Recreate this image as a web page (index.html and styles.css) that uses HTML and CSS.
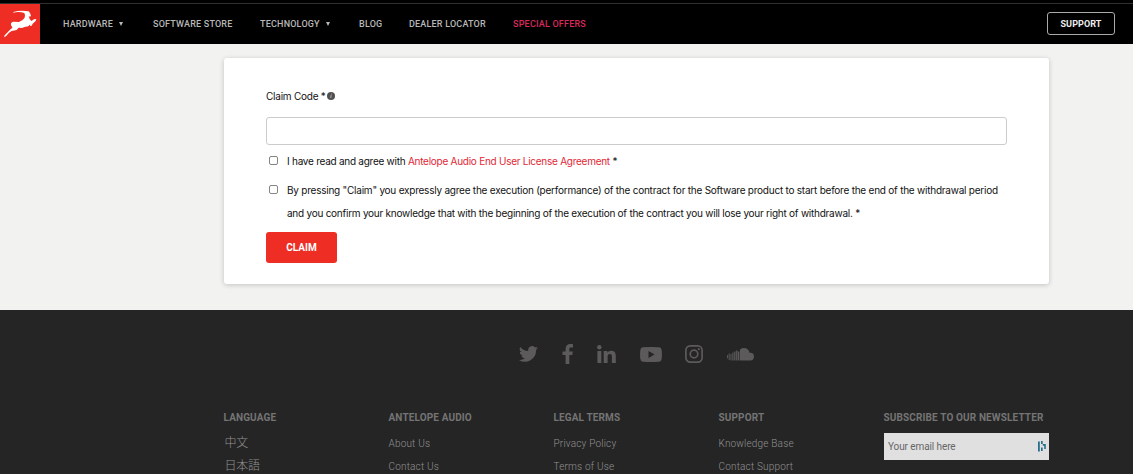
FILE: index.html
```html
<!DOCTYPE html>
<html lang="en">
<head>
  <meta charset="UTF-8">
  <meta name="viewport" content="width=device-width, initial-scale=1.0">
  <title>Claim - Antelope Audio</title>
  <link rel="stylesheet" href="styles.css">
</head>
<body>

  <header class="header">
    <a class="logo" href="#">
      <svg viewBox="0 12 120 120" width="40" height="40" fill="#fff">
        <path d="M40 36 Q58 31 77 33 L86 34 L90 39 L93 48 L89 50 L86 47 Q87 56 94 63 L102 58 L109 57 L107 63 L98 71 L95 77 L90 78 L91 73 L85 79 L74 81 L66 84 L56 83 L50 90 L35 93 L27 98 L18 109 L12 111 L14 106 L23 97 L30 89 L37 83 L35 76 L33 80 L33 69 L39 65 L57 66 Q69 61 74 53 Q77 46 73 39 Q57 34 40 38Z"/>
      </svg>
    </a>
    <nav class="nav">
      <a class="nav-hardware" href="#">HARDWARE<span class="caret"></span></a>
      <a class="nav-store" href="#">SOFTWARE STORE</a>
      <a class="nav-tech" href="#">TECHNOLOGY<span class="caret"></span></a>
      <a class="nav-blog" href="#">BLOG</a>
      <a class="nav-dealer" href="#">DEALER LOCATOR</a>
      <a class="nav-offers" href="#">SPECIAL OFFERS</a>
    </nav>
    <a class="support-btn" href="#">SUPPORT</a>
  </header>

  <main class="main">
    <form class="claim-card">
      <label class="claim-label" for="code">Claim Code *
        <svg width="8" height="8" viewBox="0 0 16 16"><circle cx="8" cy="8" r="8" fill="#505050"/><path d="M8.500 3.200h1.600l-.4 2H8zM7 6.500h2.500L8.500 12H6.300l.8-4H6.500z" fill="#aaa"/></svg>
      </label>
      <input class="claim-input" id="code" type="text">
      <label class="check">
        <input type="checkbox">
        <span class="agree">I have read and agree with <a href="#">Antelope Audio End User License Agreement</a> *</span>
      </label>
      <label class="check check-terms">
        <input type="checkbox">
        <span>By pressing "Claim" you expressly agree the execution (performance) of the contract for the Software product to start before the end of the withdrawal period<br><span class="line-two">and you confirm your knowledge that with the beginning of the execution of the contract you will lose your right of withdrawal. *</span></span>
      </label>
      <button class="claim-btn" type="button">CLAIM</button>
    </form>
  </main>

  <footer class="footer">
    <div class="social">
      <svg class="twitter" width="19" height="16" viewBox="0 0 24 20"><path d="M24 2.400a9.800 9.800 0 0 1-2.800.8A4.900 4.900 0 0 0 23.300.5a9.900 9.900 0 0 1-3.100 1.200 4.900 4.900 0 0 0-8.400 4.500A14 14 0 0 1 1.700 1a4.900 4.900 0 0 0 1.500 6.600A4.900 4.900 0 0 1 1 7v.1a4.900 4.900 0 0 0 3.900 4.800 5 5 0 0 1-2.200.1 4.900 4.900 0 0 0 4.600 3.400A9.900 9.900 0 0 1 0 17.500 14 14 0 0 0 21.500 5.100 10 10 0 0 0 24 2.400z"/></svg>
      <svg class="facebook" width="11" height="20" viewBox="0 0 11 20"><path d="M11 .2v3.300H9.100C7.600 3.500 7.300 4.200 7.300 5.200v2.300h3.500l-.5 3.500h-3v9H3.600v-9H.5V7.500h3.100V4.900C3.600 1.800 5.500 0 8.300 0c1.300 0 2.400.1 2.700.2z"/></svg>
      <svg class="linkedin" width="19" height="18" viewBox="0 0 19 18"><circle cx="2.300" cy="2.200" r="2.200"/><path d="M.4 6h3.900v12H.4zM6.700 6h3.700v1.700c.7-1.200 2-2 3.900-2 3.400 0 4.500 2.100 4.500 5.500V18h-3.900v-6c0-1.800-.4-3-2-3-1.700 0-2.300 1.200-2.300 3v6H6.700z"/></svg>
      <svg class="youtube" width="22" height="15" viewBox="0 0 22 15"><path fill-rule="evenodd" d="M3 .3Q11-.3 19 .3q2.500.2 2.700 3 .5 4.200 0 8.400-.2 2.800-2.700 3-8 .6-16 0-2.500-.2-2.700-3-.5-4.200 0-8.400Q.5.500 3 .3zM8.500 4v7l6-3.500z"/></svg>
      <svg class="instagram" width="18" height="18" viewBox="0 0 18 18"><rect x=".9" y=".9" width="16.200" height="16.200" rx="4.300" fill="none" stroke="#5c5a5b" stroke-width="1.700"/><circle cx="9" cy="9" r="3.800" fill="none" stroke="#5c5a5b" stroke-width="1.700"/><circle cx="13.800" cy="4.200" r="1.100"/></svg>
      <svg class="soundcloud" width="27" height="13" viewBox="0 0 27 13"><path d="M0 7h.9v3.500H0zM1.700 5.500h1v6.500h-1zM3.500 6h1v6.500h-1zM5.300 4.500h1.200v8H5.300zM7.200 3.500h1.300v9H7.200zM9.100 2.500h1.400v10H9.100zM11 3.500h1.400v9H11zM13 1.500Q15 .1 17 .1q4.500.1 5.600 4.700Q26.900 4.200 27 8.700q-.2 3.600-3.700 3.800H13z"/></svg>
    </div>
    <div class="columns">
      <div class="col language">
        <h4>LANGUAGE</h4>
        <a href="#">中文</a>
        <a href="#">日本語</a>
      </div>
      <div class="col">
        <h4>ANTELOPE AUDIO</h4>
        <a href="#">About Us</a>
        <a href="#">Contact Us</a>
      </div>
      <div class="col">
        <h4>LEGAL TERMS</h4>
        <a href="#">Privacy Policy</a>
        <a href="#">Terms of Use</a>
      </div>
      <div class="col">
        <h4>SUPPORT</h4>
        <a href="#">Knowledge Base</a>
        <a href="#">Contact Support</a>
      </div>
      <div class="col">
        <h4>SUBSCRIBE TO OUR NEWSLETTER</h4>
        <div class="email">
          <input type="text" placeholder="Your email here">
          <svg width="8" height="11" viewBox="0 0 8 11" fill="#28708a"><path d="M0 .5h1.800v10H0zM3 0h1.700v3H3zM3 6.500h1.700v3.500H3zM4.700 3h1.500v1.800H4.700zM6.200 3h1.600v5H6.200z"/></svg>
        </div>
      </div>
    </div>
  </footer>

</body>
</html>
```

FILE: styles.css
```css
* {
  box-sizing: border-box;
}
body {
  margin: 0;
  height: 474px;
  overflow: hidden;
  background: #f2f2f1;
  font-family: Roboto, "Liberation Sans", sans-serif;
  color: #111;
}
a {
  text-decoration: none;
}
.header {
  display: flex;
  align-items: center;
  height: 44px;
  padding-top: 3px;
  background: linear-gradient(#000 3px, #303030 3px, #303030 4px, #000 4px);
}
.logo {
  width: 40px;
  height: 40px;
  margin-top: 1px;
  background: #ee2d24;
}
.logo svg {
  display: block;
}
.nav {
  display: flex;
  margin: 1px 0 0 23px;
  font-size: 9px;
  font-weight: 500;
  line-height: 12px;
  white-space: nowrap;
}
.nav a {
  display: flex;
  align-items: center;
  color: #b8b8b8;
  letter-spacing: 0.2px;
}
.nav-hardware {
  width: 90px;
}
.nav-store {
  width: 107px;
}
.nav-tech {
  width: 99px;
}
.nav-blog {
  width: 50px;
}
.nav-dealer {
  width: 104px;
}
.nav .nav-offers {
  color: #d9295b;
}
.caret {
  margin-left: 6px;
  border: 2.5px solid transparent;
  border-top: 4px solid #b8b8b8;
  border-bottom: 0;
}
.support-btn {
  width: 68px;
  height: 23px;
  margin: 0 18px 0 auto;
  border: 1px solid #aaa;
  border-radius: 3px;
  color: #eee;
  font-size: 9px;
  font-weight: 700;
  line-height: 22px;
  letter-spacing: 0.1px;
  text-align: center;
}
.main {
  height: 266px;
  padding: 14px 84px 0 224px;
}
.claim-card {
  height: 226px;
  padding: 30px 42px 0;
  background: #fff;
  border-radius: 3px;
  box-shadow: 0 1px 5px rgba(0, 0, 0, 0.2);
  font-family: Inter, "Liberation Sans", sans-serif;
  font-size: 10px;
  letter-spacing: -0.23px;
  white-space: nowrap;
}
.claim-label {
  display: flex;
  align-items: center;
  gap: 1px;
  height: 16px;
}
.claim-input {
  display: block;
  width: 741px;
  height: 28px;
  margin: 13px 0 5px;
  border: 1px solid #ccc;
  border-radius: 3px;
  background: #fff;
}
.check {
  display: flex;
  line-height: 23px;
}
.check input {
  flex: none;
  appearance: none;
  width: 9px;
  height: 9px;
  margin: 6px 9px 0 3px;
  border: 1px solid #858585;
  border-radius: 2px;
  background: #fff;
}
.check a {
  color: #e32636;
}
.agree {
  letter-spacing: -0.26px;
}
.check-terms {
  margin-top: 6px;
}
.line-two {
  letter-spacing: -0.245px;
}
.claim-btn {
  width: 71px;
  height: 31px;
  margin-top: 7px;
  padding: 0;
  border: 0;
  border-radius: 3px;
  background: #ee2d24;
  color: #fff;
  font: 700 10px Roboto, sans-serif;
  letter-spacing: 0;
}
.footer {
  height: 164px;
  padding-top: 34px;
  background: #252525;
}
.social {
  display: flex;
  align-items: center;
  height: 20px;
  margin-left: 518.5px;
  fill: #5c5a5b;
}
.facebook {
  margin-left: 24px;
}
.linkedin {
  margin-left: 24px;
}
.youtube {
  margin-left: 24px;
}
.instagram {
  margin-left: 23px;
}
.soundcloud {
  margin-left: 24px;
}
.columns {
  display: grid;
  grid-template-columns: repeat(5, 165px);
  margin: 47px 0 0 223.5px;
  white-space: nowrap;
}
.col h4 {
  margin: 0 0 7px;
  color: #747474;
  font-size: 10px;
  font-weight: 700;
  line-height: 14px;
  letter-spacing: 0.13px;
}
.col a {
  display: block;
  height: 23px;
  color: #929292;
  font-size: 10px;
  font-weight: 300;
  line-height: 23px;
  letter-spacing: 0.18px;
}
.language a {
  padding-left: 1px;
  font-family: "Noto Sans CJK JP", sans-serif;
  font-size: 12px;
  font-weight: 300;
  line-height: 20px;
  letter-spacing: -0.2px;
}
.email {
  display: flex;
  align-items: center;
  width: 165px;
  height: 27px;
  margin: 8px 0 0 0.5px;
  background: #e0e0e0;
}
.email input {
  width: 154px;
  padding: 0 4px;
  border: 0;
  outline: 0;
  background: none;
  font: 10px Roboto, sans-serif;
  letter-spacing: -0.1px;
}
.email input::placeholder {
  color: #666;
}
```
